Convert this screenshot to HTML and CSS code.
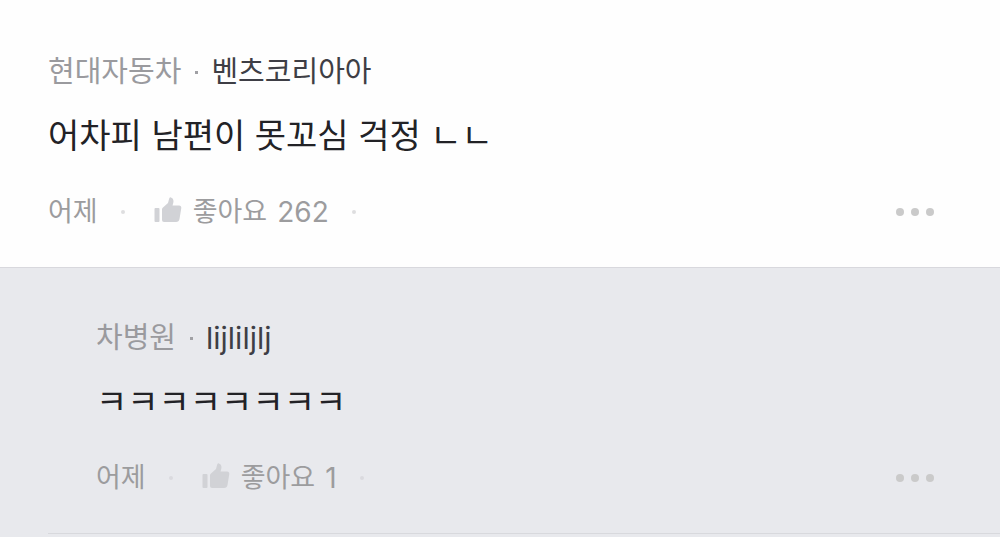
FILE: index.html
```html
<!DOCTYPE html>
<html lang="ko">
<head>
  <meta charset="UTF-8">
  <meta name="viewport" content="width=device-width, initial-scale=1.0">
  <title>댓글</title>
  <link rel="stylesheet" href="styles.css">
</head>
<body>
  <main>
    <!-- 댓글 -->
    <article class="comment">
      <div class="author">
        <a href="#" class="company">현대자동차</a>
        <span class="author-dot"></span>
        <span class="nickname">벤츠코리아아</span>
      </div>
      <p class="text">어차피 남편이 못꼬심 걱정 ㄴㄴ</p>
      <div class="meta">
        <span>어제</span>
        <span class="dot"></span>
        <button type="button" class="like">
          <svg class="thumb" viewBox="0 0 28 26" aria-hidden="true">
            <path d="M1.500 11h3q1 0 1 1v12q0 1-1 1h-3q-1 0-1-1V12q0-1 1-1z"/>
            <path d="M8 12.500q0-1 .7-1.700L14 6l1.200-4.500Q15.700.200 17 .400q2.500.6 2.500 3.600 0 2-1 4.500H25q2.500 0 2.300 2.500L25.500 22q-.5 3-3.500 3H10q-2 0-2-2z"/>
          </svg>
          <span>좋아요</span>
          <span class="count">262</span>
        </button>
        <span class="dot"></span>
        <button type="button" class="more" aria-label="더보기"><i></i><i></i><i></i></button>
      </div>
    </article>

    <!-- 답글 -->
    <section class="replies">
      <article class="comment reply">
        <div class="author">
          <a href="#" class="company">차병원</a>
          <span class="author-dot"></span>
          <span class="nickname latin">lijliljlj</span>
        </div>
        <p class="text">ㅋㅋㅋㅋㅋㅋㅋㅋ</p>
        <div class="meta">
          <span>어제</span>
          <span class="dot"></span>
          <button type="button" class="like">
            <svg class="thumb" viewBox="0 0 28 26" aria-hidden="true">
              <path d="M1.500 11h3q1 0 1 1v12q0 1-1 1h-3q-1 0-1-1V12q0-1 1-1z"/>
              <path d="M8 12.500q0-1 .7-1.700L14 6l1.200-4.500Q15.700.200 17 .400q2.500.6 2.500 3.600 0 2-1 4.500H25q2.500 0 2.300 2.500L25.500 22q-.5 3-3.500 3H10q-2 0-2-2z"/>
            </svg>
            <span>좋아요</span>
            <span class="count">1</span>
          </button>
          <span class="dot"></span>
          <button type="button" class="more" aria-label="더보기"><i></i><i></i><i></i></button>
        </div>
      </article>
      <hr class="divider">
    </section>
  </main>
</body>
</html>
```
FILE: styles.css
```css
* {
  box-sizing: border-box;
}
body {
  margin: 0;
  background-color: #fefefe;
  font-family: Inter, "Noto Sans CJK KR", sans-serif;
  color: #9c9c9e;
}
main {
  display: flex;
  flex-direction: column;
  min-height: 100vh;
}

/* 댓글 */
.comment {
  padding: 52px 66px 34px 48px;
}
.author {
  display: flex;
  align-items: center;
  font-size: 29px;
  line-height: 40px;
}
.company {
  color: #9a9a9e;
  text-decoration: none;
}
.author-dot {
  width: 3px;
  height: 3px;
  margin: 0 13px 0 14px;
  background-color: #a0a0a4;
}
.nickname {
  color: #3e3e45;
}
.latin {
  font-size: 30px;
}
.text {
  margin: 19px 0 30px;
  font-size: 34px;
  line-height: 50px;
  color: #222226;
}
.meta {
  display: flex;
  align-items: center;
  font-size: 27px;
  line-height: 42px;
}
.dot {
  width: 4px;
  height: 4px;
  margin: 0 23px;
  border-radius: 50%;
  background-color: #dedee0;
}
button {
  padding: 0;
  border: none;
  background: none;
  font: inherit;
  color: inherit;
  cursor: pointer;
}
.like {
  display: flex;
  align-items: center;
  margin-left: 6px;
}
.thumb {
  width: 28px;
  height: 26px;
  margin: 0 11px 4px 0;
  fill: #d1d2d6;
}
.count {
  margin-left: 10px;
  font-size: 28px;
}
.more {
  display: flex;
  gap: 7px;
  margin-left: auto;
}
.more i {
  width: 8px;
  height: 8px;
  border-radius: 50%;
  background-color: #cacaca;
}

/* 답글 */
.replies {
  flex: 1;
  border-top: 1px solid #d8d8dd;
  background-color: #e8e9ed;
}
.reply {
  padding-top: 50px;
  padding-left: 96px;
}
.reply .dot {
  background-color: #dadade;
}
.divider {
  height: 1px;
  margin: 0 0 0 48px;
  border: none;
  background-color: #d8d9dd;
}
```
